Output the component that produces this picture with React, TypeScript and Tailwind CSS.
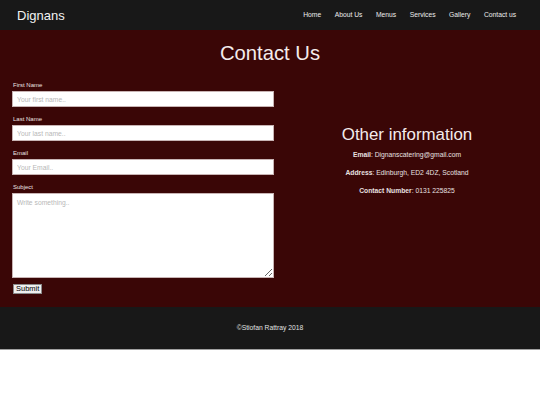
import React from "react";

const font = { fontFamily: '"Liberation Sans", Arial, sans-serif' };

export default function App() {
  const nav = ["Home", "About Us", "Menus", "Services", "Gallery", "Contact us"];
  const inputCls =
    "block mt-[2px] h-[16px] w-full bg-white border border-[#c8b4b4] px-[4px] text-[6.75px] placeholder:text-[#b8b8b8] outline-none";
  const labelCls = "block text-[6px] leading-[7px] text-[#ece2e2] pl-[1px] mt-[9px]";
  return (
    <div className="w-[540px] min-h-[405px] bg-white" style={font}>
      <header className="h-[30px] bg-[#181818] flex items-center justify-between pl-[17px] pr-[17px]">
        <div className="text-[13px] text-[#f2f2f2] leading-none">Dignans</div>
        <nav className="flex items-center">
          {nav.map((n) => (
            <a key={n} className="px-[6.75px] text-[6.75px] text-[#ececec] leading-none">
              {n}
            </a>
          ))}
        </nav>
      </header>
      <main className="h-[277px] bg-[#3a0606] pt-[11px]">
        <h1 className="text-center text-[20.25px] leading-[24px] text-[#f4ecec]">Contact Us</h1>
        <div className="flex mt-[8px]">
          <form className="w-[274px] pl-[12px] flex flex-col" onSubmit={(e) => e.preventDefault()}>
            <label className={labelCls}>First Name</label>
            <input className={inputCls} placeholder="Your first name.." />
            <label className={labelCls}>Last Name</label>
            <input className={inputCls} placeholder="Your last name.." />
            <label className={labelCls}>Email</label>
            <input className={inputCls} placeholder="Your Email.." />
            <label className={labelCls}>Subject</label>
            <textarea
              className="block mt-[2px] h-[85px] w-full bg-white border border-[#c8b4b4] px-[4px] py-[4px] text-[6.75px] placeholder:text-[#b8b8b8] outline-none"
              placeholder="Write something.."
            />
            <div className="mt-[6px] flex pl-[1px]">
              <button
                type="submit"
                className="h-[10px] px-[2px] bg-[#efefef] border border-[#8a8a8a] text-[7.5px] leading-none text-black"
              >
                Submit
              </button>
            </div>
          </form>
          <div className="flex-1 text-center text-[#e8e0e0] pt-[52px]">
            <h2 className="text-[16.9px] leading-[20px] text-[#f4ecec]">Other information</h2>
            <p className="text-[6.75px] leading-[8px] mt-[6px]">
              <b>Email</b>: Dignanscatering@gmail.com
            </p>
            <p className="text-[6.75px] leading-[8px] mt-[10px]">
              <b>Address</b>: Edinburgh, ED2 4DZ, Scotland
            </p>
            <p className="text-[6.75px] leading-[8px] mt-[10px]">
              <b>Contact Number</b>: 0131 225825
            </p>
          </div>
        </div>
      </main>
      <footer className="h-[43px] bg-[#181818] border-b border-[#a0a0a0] flex items-center justify-center">
        <p className="text-[6.75px] text-[#e0e0e0]">©Stiofan Rattray 2018</p>
      </footer>
    </div>
  );
}
